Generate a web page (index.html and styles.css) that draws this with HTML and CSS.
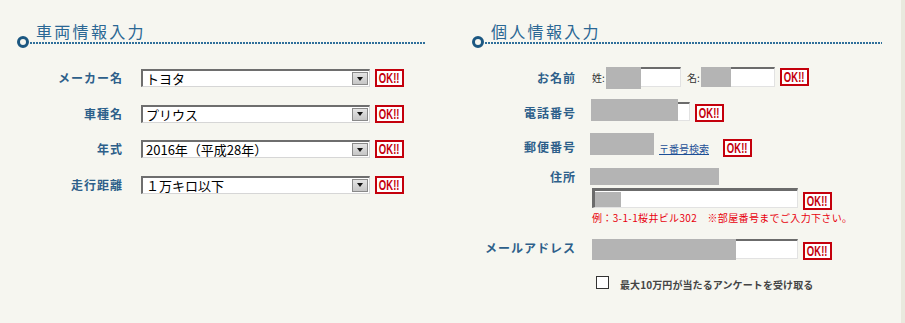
FILE: index.html
```html
<!DOCTYPE html>
<html lang="ja">
<head>
    <meta charset="UTF-8">
    <meta name="viewport" content="width=device-width, initial-scale=1.0">
    <title>車両情報・個人情報入力</title>
    <link rel="stylesheet" href="styles.css">
</head>
<body>
    <div class="page">
        <!-- 車両情報 -->
        <div class="col col-car">
            <div class="head">
                <span class="ring"></span>
                <div class="head-main">
                    <h2>車両情報入力</h2>
                    <div class="dots"></div>
                </div>
            </div>
            <div class="car-form">
                <div class="row">
                    <label>メーカー名</label>
                    <div class="select"><span>トヨタ</span><i class="arrow"></i></div>
                    <span class="ok"><b>OK!!</b></span>
                </div>
                <div class="row">
                    <label>車種名</label>
                    <div class="select"><span>プリウス</span><i class="arrow"></i></div>
                    <span class="ok"><b>OK!!</b></span>
                </div>
                <div class="row">
                    <label>年式</label>
                    <div class="select"><span>2016年（平成28年）</span><i class="arrow"></i></div>
                    <span class="ok"><b>OK!!</b></span>
                </div>
                <div class="row">
                    <label>走行距離</label>
                    <div class="select"><span>１万キロ以下</span><i class="arrow"></i></div>
                    <span class="ok"><b>OK!!</b></span>
                </div>
            </div>
        </div>

        <!-- 個人情報 -->
        <div class="col col-person">
            <div class="head">
                <span class="ring"></span>
                <div class="head-main">
                    <h2>個人情報入力</h2>
                    <div class="dots"></div>
                </div>
            </div>
            <div class="person-form">
                <div class="prow r-name">
                    <label>お名前</label>
                    <span class="sub sei">姓:</span>
                    <span class="field f-sei"><span class="redact"></span></span>
                    <span class="sub mei">名:</span>
                    <span class="field f-mei"><span class="redact"></span></span>
                    <span class="ok"><b>OK!!</b></span>
                </div>
                <div class="prow r-tel">
                    <label>電話番号</label>
                    <span class="field f-tel"><span class="redact"></span></span>
                    <span class="ok"><b>OK!!</b></span>
                </div>
                <div class="prow r-zip">
                    <label>郵便番号</label>
                    <span class="mask m-zip"></span>
                    <a href="#" class="zip-link">〒番号検索</a>
                    <span class="ok"><b>OK!!</b></span>
                </div>
                <div class="prow r-addr">
                    <label>住所</label>
                    <span class="mask m-pref"></span>
                </div>
                <div class="prow r-addr2">
                    <span class="field f-addr"><span class="redact"></span></span>
                    <span class="ok"><b>OK!!</b></span>
                </div>
                <div class="prow r-note">
                    <p class="note">例：3-1-1桜井ビル302　※部屋番号までご入力下さい。</p>
                </div>
                <div class="prow r-mail">
                    <label>メールアドレス</label>
                    <span class="field f-mail"><span class="redact"></span></span>
                    <span class="ok"><b>OK!!</b></span>
                </div>
                <div class="prow r-check">
                    <span class="checkbox"></span>
                    <span class="check-text">最大10万円が当たるアンケートを受け取る</span>
                </div>
            </div>
        </div>
    </div>
</body>
</html>
```

FILE: styles.css
```css
html, body {
    margin: 0;
    padding: 0;
    height: 100%;
}
body {
    background-color: #f6f6f0;
    font-family: "Noto Sans CJK JP", sans-serif;
    color: #333;
}
.page {
    display: flex;
    width: 901px;
    min-height: 100%;
    border-right: 4px solid #e9e9de;
}
.col {
    box-sizing: border-box;
    padding-top: 21px;
}
.col-car {
    width: 450px;
    padding-left: 17px;
}
.col-person {
    width: 451px;
    padding-left: 22px;
}

/* 見出し */
.head {
    display: flex;
    align-items: flex-end;
    width: 409px;
}
.col-person .head {
    width: 410px;
}
.ring {
    flex: none;
    width: 12px;
    height: 12px;
    box-sizing: border-box;
    border: 3px solid #1b5781;
    border-radius: 50%;
    margin-bottom: -4px;
}
.head-main {
    flex: 1;
    margin-left: 1px;
}
h2 {
    margin: 0;
    padding: 0 0 1px 6px;
    font-size: 16px;
    line-height: 20px;
    font-weight: normal;
    letter-spacing: 2.3px;
    color: #2a6794;
}
.dots {
    height: 2px;
    background: repeating-linear-gradient(90deg, #2f6f9a 0 2px, transparent 2px 3px);
}

/* 車両情報 */
.car-form {
    margin-top: 25px;
    display: flex;
    flex-direction: column;
    gap: 17.5px;
}
.row {
    display: flex;
    align-items: center;
    height: 18px;
}
label {
    flex: none;
    width: 106px;
    text-align: right;
    font-size: 12px;
    line-height: 16px;
    font-weight: bold;
    letter-spacing: 1px;
    color: #2d5f8a;
}
.car-form label {
    margin-right: 18px;
}
.select {
    display: flex;
    align-items: center;
    width: 229px;
    height: 18px;
    box-sizing: border-box;
    padding-left: 3px;
    background: #fff;
    border-top: 2px solid #6e6e6e;
    border-left: 2px solid #6e6e6e;
    border-right: 1px solid #d6d6d6;
    border-bottom: 1px solid #d6d6d6;
    font-size: 13px;
    line-height: 15px;
    color: #000;
}
.arrow {
    display: flex;
    align-items: center;
    justify-content: center;
    margin-left: auto;
    margin-right: 1px;
    width: 16px;
    height: 13px;
    box-sizing: border-box;
    border: 1px solid #8a8a8a;
    background: linear-gradient(#e4e4e4, #c6c6c6);
}
.arrow::after {
    content: "";
    border-top: 4px solid #111;
    border-left: 3.5px solid transparent;
    border-right: 3.5px solid transparent;
}
.ok {
    flex: none;
    display: flex;
    align-items: center;
    justify-content: center;
    margin-left: 5px;
    width: 29px;
    height: 18px;
    box-sizing: border-box;
    border: 2px solid #c4000c;
    background: #fff;
}
.ok b {
    display: inline-block;
    font: bold 14px/14px "Liberation Sans", Arial, sans-serif;
    color: #c4000c;
    transform: scaleX(0.68);
}

/* 個人情報 */
.person-form {
    margin-top: 23px;
}
.prow {
    display: flex;
    align-items: flex-start;
}
.person-form label {
    width: 104px;
    margin-right: 14px;
}
.sub {
    width: 14px;
    font-size: 10px;
    line-height: 14px;
    color: #333;
}
.field {
    position: relative;
    display: block;
    box-sizing: border-box;
    background: #fff;
    border-top: 2px solid #6b6b6b;
    border-left: 1px solid #9a9a9a;
    border-right: 1px solid #e2e2e2;
    border-bottom: 1px solid #e2e2e2;
}
.redact {
    position: absolute;
    background: #b4b4b4;
}
.mask {
    display: block;
    background: #b4b4b4;
}

.r-name {
    height: 32px;
}
.r-name label {
    margin-top: 3px;
}
.sei {
    margin: 4px 0 0 2px;
}
.mei {
    margin: 4px 0 0 6px;
}
.f-sei {
    width: 75px;
    height: 20px;
}
.f-sei .redact {
    left: -1px;
    top: -2px;
    width: 35px;
    height: 22px;
}
.f-mei {
    width: 74px;
    height: 20px;
}
.f-mei .redact {
    left: -1px;
    top: -2px;
    width: 30px;
    height: 20px;
}
.r-name .ok {
    margin-top: 1px;
}

.r-tel {
    height: 34px;
}
.r-tel label {
    margin-top: 6px;
}
.f-tel {
    margin: 3px 0 0 1px;
    width: 99px;
    height: 19px;
}
.f-tel .redact {
    left: -1px;
    top: -5px;
    width: 87px;
    height: 22px;
}
.r-tel .ok {
    margin-top: 5px;
}

.r-zip {
    height: 35px;
}
.r-zip label {
    margin-top: 6px;
}
.m-zip {
    width: 64px;
    height: 22px;
}
.zip-link {
    margin: 9px 0 0 5px;
    font-size: 10px;
    line-height: 14px;
    color: #1d4f96;
}
.r-zip .ok {
    margin: 6px 0 0 14px;
}

.r-addr {
    height: 20px;
}
.r-addr label {
    margin-top: 1px;
}
.m-pref {
    width: 129px;
    height: 17px;
}

.r-addr2 {
    height: 24px;
    padding-left: 120px;
}
.f-addr {
    width: 206px;
    height: 20px;
    border-top: 3px solid #6b6b6b;
    border-left: 3px solid #6b6b6b;
}
.f-addr .redact {
    left: 0;
    top: 1px;
    width: 26px;
    height: 15px;
}
.r-addr2 .ok {
    margin-top: 4px;
}

.r-note {
    height: 26px;
    padding-left: 120px;
}
.note {
    margin: 0;
    font-size: 10px;
    line-height: 12px;
    letter-spacing: 0.35px;
    color: #e8000d;
}

.r-mail {
    height: 38px;
}
.r-mail label {
    margin-top: 2px;
}
.f-mail {
    margin: 1px 0 0 2px;
    width: 206px;
    height: 20px;
}
.f-mail .redact {
    left: -1px;
    top: -2px;
    width: 144px;
    height: 21px;
}
.r-mail .ok {
    margin-top: 4px;
}

.r-check {
    padding-left: 124px;
}
.checkbox {
    width: 13px;
    height: 13px;
    box-sizing: border-box;
    border: 1px solid #333;
    background: #fff;
}
.check-text {
    margin: 2px 0 0 11px;
    font-size: 10px;
    line-height: 14px;
    font-weight: bold;
    letter-spacing: 0.1px;
    color: #444;
}
```
